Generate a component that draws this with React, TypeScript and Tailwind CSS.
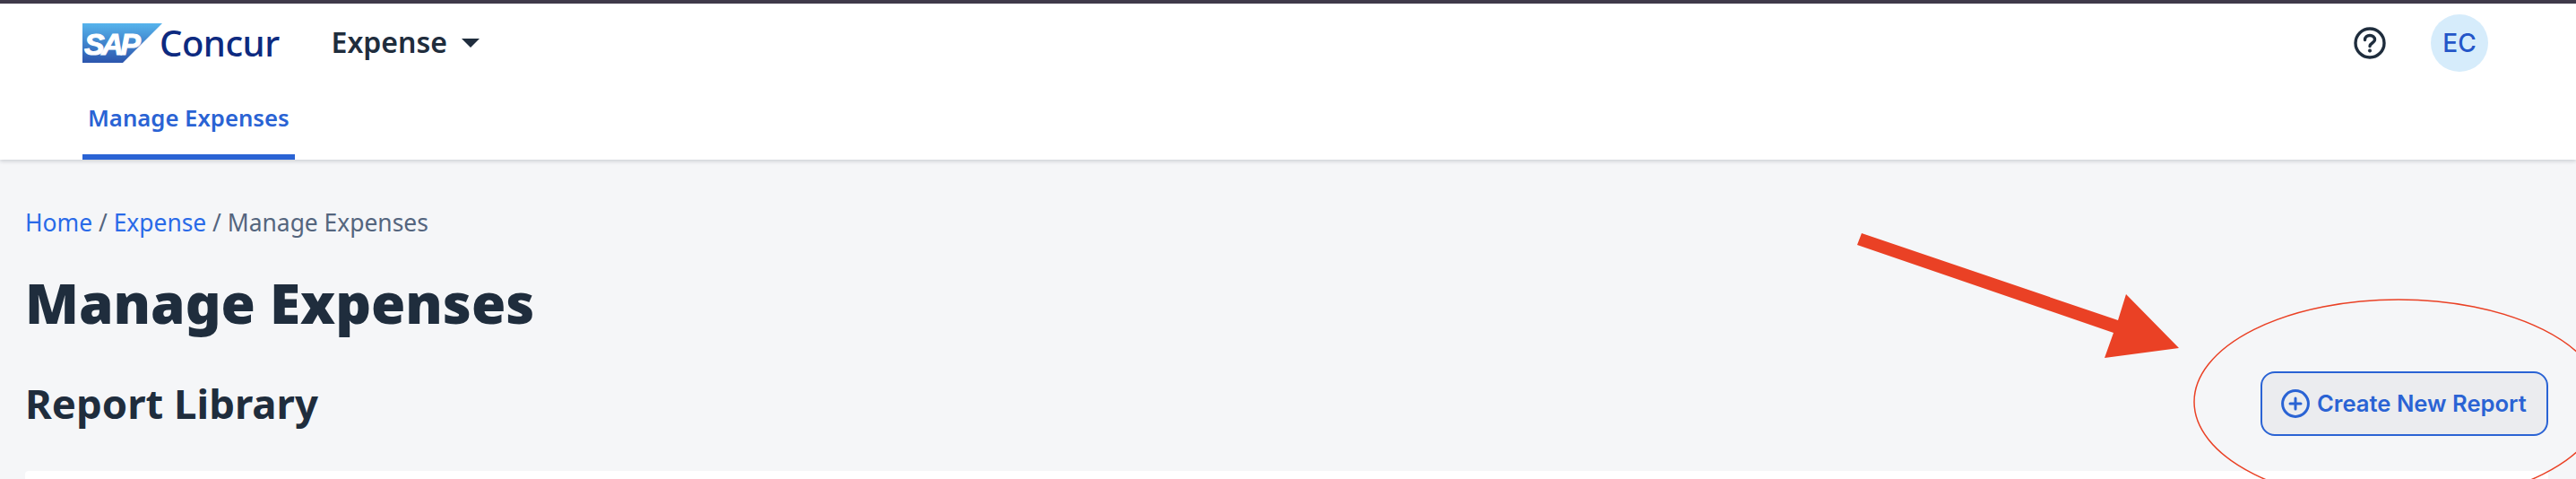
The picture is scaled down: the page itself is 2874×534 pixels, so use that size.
const SANS = "font-['Noto_Sans','Open_Sans',sans-serif]";

function SapLogo() {
  return (
    <svg width="89" height="44" viewBox="0 0 89 44" className="shrink-0">
      <defs>
        <linearGradient id="sapFill" x1="0" y1="0" x2="0" y2="1">
          <stop offset="0" stopColor="#56b4ec" />
          <stop offset="1" stopColor="#2c55ad" />
        </linearGradient>
      </defs>
      <polygon points="0,0 89,0 45,44 0,44" fill="url(#sapFill)" />
      <text
        x="2"
        y="35"
        fill="#fff"
        stroke="#fff"
        strokeWidth="1"
        fontFamily="Liberation Sans, sans-serif"
        fontWeight="700"
        fontStyle="italic"
        fontSize="34"
        letterSpacing="-3.5"
      >
        SAP
      </text>
    </svg>
  );
}

function HelpIcon() {
  return (
    <svg width="36" height="36" viewBox="0 0 36 36" fill="none" stroke="#1f2d3d" strokeWidth="3.4">
      <circle cx="18" cy="18" r="16" />
      <path d="M12.5 14.5c0-3 2.4-5 5.5-5s5.5 2 5.5 4.6c0 4-5.5 3.8-5.5 7.4" strokeLinecap="round" />
      <circle cx="18" cy="26.5" r="1.6" fill="#1f2d3d" stroke="#1f2d3d" strokeWidth="1" />
    </svg>
  );
}

function PlusCircle() {
  return (
    <svg width="32" height="32" viewBox="0 0 32 32" fill="none" stroke="#2a63d4" strokeWidth="3">
      <circle cx="16" cy="16" r="14.4" />
      <path d="M16 10v12M10 16h12" strokeLinecap="round" />
    </svg>
  );
}

function Annotation() {
  return (
    <svg
      width="2874"
      height="534"
      viewBox="0 0 2874 534"
      fill="none"
      className="absolute left-0 top-0 pointer-events-none"
    >
      <polygon
        points="2077,260 2363,357 2372,328 2431,388 2348,399 2358,371 2072,273"
        fill="#ea4125"
      />
      <ellipse cx="2676" cy="448" rx="228" ry="114" stroke="#ea4125" strokeWidth="1.5" />
    </svg>
  );
}

export default function App() {
  return (
    <div className={`relative h-[534px] w-full overflow-hidden bg-[#f5f6f8] ${SANS}`}>
      <header className="border-t-4 border-[#3f3a4a] bg-white shadow-[0_2px_4px_rgba(31,45,61,0.18)]">
        <div className="flex h-[88px] items-center pl-[92px] pr-[98px]">
          <SapLogo />
          <span className="ml-[-3px] text-[40px] font-medium leading-none tracking-[-0.5px] text-[#0d2a80]">Concur</span>
          <span className="ml-[58px] mb-[2px] text-[32px] font-semibold leading-none text-[#1f2d3d]">Expense</span>
          <span className="ml-[16px] h-0 w-0 border-x-[10px] border-t-[10px] border-x-transparent border-t-[#1f2d3d]" />
          <div className="ml-auto flex items-center gap-[50px]">
            <HelpIcon />
            <div className="flex h-16 w-16 items-center justify-center rounded-full bg-[#d6ecfb] font-['Inter',sans-serif] text-[28px] font-medium text-[#2456c8]">
              EC
            </div>
          </div>
        </div>
        <div className="pl-[92px]">
          <div className="inline-flex h-[86px] w-[237px] items-center border-b-[6px] border-[#2a63d4] pl-[6px]">
            <span className="text-[25.7px] font-semibold text-[#2a63d4]">Manage Expenses</span>
          </div>
        </div>
      </header>

      <main className="pl-[28px] pr-[31px] pt-[52px]">
        <nav className="text-[26.4px] leading-[36px] text-[#54657e]">
          <span className="text-[#2a6ae8]">Home</span> / <span className="text-[#2a6ae8]">Expense</span> / Manage Expenses
        </nav>
        <h1 className="mt-[35px] text-[62px] font-black leading-[72px] text-[#1f2d3d]">Manage Expenses</h1>
        <div className="mt-[41px] flex items-center justify-between">
          <h2 className="mb-[3px] text-[45.5px] font-bold leading-[60px] text-[#1f2d3d]">Report Library</h2>
          <button className="flex h-[72px] w-[321px] items-center gap-[8px] rounded-[16px] border-2 border-[#2a63d4] bg-[#ebecef] pl-[21px] font-['Inter',sans-serif] text-[25.6px] font-semibold text-[#2a63d4]">
            <PlusCircle />
            Create New Report
          </button>
        </div>
        <div className="mt-[39px] h-[60px] rounded-t-sm bg-white" />
      </main>

      <Annotation />
    </div>
  );
}
